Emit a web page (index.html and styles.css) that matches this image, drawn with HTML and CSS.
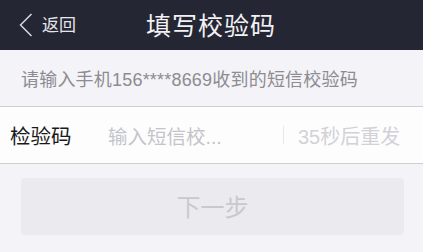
FILE: index.html
```html
<!DOCTYPE html>
<html lang="zh">
<head>
<meta charset="utf-8">
<link rel="stylesheet" href="styles.css">
</head>
<body>
<div class="page">
  <header class="nav">
    <div class="back">
      <svg class="chev" width="14" height="24" viewBox="0 0 14 24"><path d="M12.5 1 L1.5 12 L12.5 23" fill="none" stroke="#d8d8de" stroke-width="1.5"/></svg>
      <span class="back-text">返回</span>
    </div>
    <div class="title">填写校验码</div>
  </header>
  <div class="hint">请输入手机156****8669收到的短信校验码</div>
  <div class="row">
    <span class="label">检验码</span>
    <span class="placeholder">输入短信校...</span>
    <span class="divider"></span>
    <span class="resend">35秒后重发</span>
  </div>
  <div class="actions">
    <div class="btn">下一步</div>
  </div>
</div>
</body>
</html>
```
FILE: styles.css
```css
html, body { margin: 0; padding: 0; }
body {
  width: 423px; height: 252px; overflow: hidden;
  background: #f4f3f8;
  font-family: "Liberation Sans", "Noto Sans CJK SC", sans-serif;
}
.page { display: flex; flex-direction: column; }
.nav {
  height: 50px; background: #242633;
  display: flex; align-items: center; position: relative;
}
.back { display: flex; align-items: center; padding-left: 19px; gap: 9px; }
.chev { display: block; }
.back-text { color: #e6e6ea; font-size: 17px; line-height: 1; }
.title {
  position: absolute; left: 146px; top: 0; height: 48px;
  display: flex; align-items: center;
  color: #f2f2f5; font-size: 25px; letter-spacing: 1px;
}
.hint {
  height: 56px; display: flex; align-items: center;
  padding-left: 21px; color: #8c8c91; font-size: 18px; letter-spacing: 0.2px;
  border-bottom: 1px solid #cfcfd3;
}
.row {
  height: 56px; background: #fdfdfe;
  display: flex; align-items: center;
  border-bottom: 1px solid #cfcfd3;
}
.label { margin-left: 10px; width: 98px; font-size: 20.5px; color: #1a1a1a; }
.placeholder { width: 175px; font-size: 19.5px; color: #c4c4c8; }
.divider { width: 1px; height: 18px; background: #e8e8ea; }
.resend { margin-left: 14px; font-size: 20px; color: #d2d2d6; }
.actions { padding: 14px 19px 0 21px; }
.btn {
  height: 57px; background: #ebeaee; border-radius: 4px;
  display: flex; align-items: center; justify-content: center;
  font-size: 24px; color: #c9c9cd; padding-bottom: 3px; box-sizing: border-box;
}
```
